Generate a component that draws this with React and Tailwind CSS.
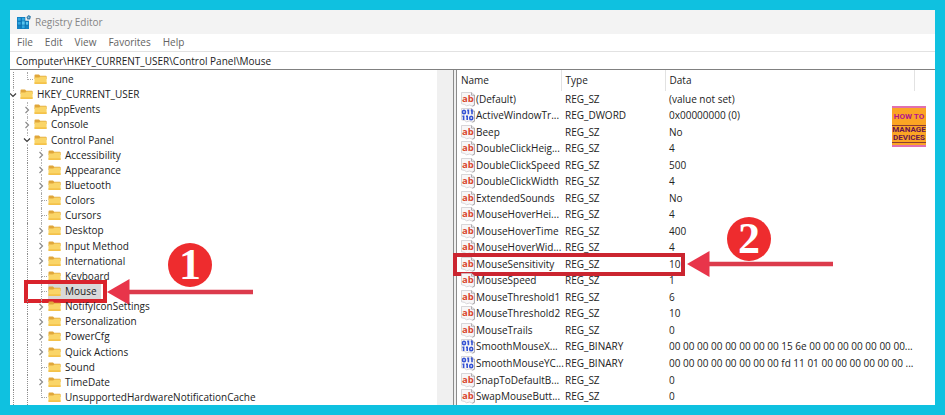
import React, { useState } from "react";

const menus = ["File", "Edit", "View", "Favorites", "Help"];

// marker: what stands in the last guide column of the row
const keys = [
  { name: "zune", depth: 1, marker: "end" },
  { name: "HKEY_CURRENT_USER", depth: 0, marker: "open" },
  { name: "AppEvents", depth: 1, marker: "closed" },
  { name: "Console", depth: 1, marker: "closed" },
  { name: "Control Panel", depth: 1, marker: "open" },
  { name: "Accessibility", depth: 2, marker: "closed" },
  { name: "Appearance", depth: 2, marker: "closed" },
  { name: "Bluetooth", depth: 2, marker: "closed" },
  { name: "Colors", depth: 2, marker: "leaf" },
  { name: "Cursors", depth: 2, marker: "leaf" },
  { name: "Desktop", depth: 2, marker: "closed" },
  { name: "Input Method", depth: 2, marker: "closed" },
  { name: "International", depth: 2, marker: "closed" },
  { name: "Keyboard", depth: 2, marker: "leaf" },
  { name: "Mouse", depth: 2, marker: "leaf" },
  { name: "NotifyIconSettings", depth: 2, marker: "closed" },
  { name: "Personalization", depth: 2, marker: "closed" },
  { name: "PowerCfg", depth: 2, marker: "closed" },
  { name: "Quick Actions", depth: 2, marker: "closed" },
  { name: "Sound", depth: 2, marker: "leaf" },
  { name: "TimeDate", depth: 2, marker: "closed" },
  { name: "UnsupportedHardwareNotificationCache", depth: 2, marker: "end" },
];

const values = [
  ["(Default)", "REG_SZ", "(value not set)"],
  ["ActiveWindowTr...", "REG_DWORD", "0x00000000 (0)"],
  ["Beep", "REG_SZ", "No"],
  ["DoubleClickHeig...", "REG_SZ", "4"],
  ["DoubleClickSpeed", "REG_SZ", "500"],
  ["DoubleClickWidth", "REG_SZ", "4"],
  ["ExtendedSounds", "REG_SZ", "No"],
  ["MouseHoverHei...", "REG_SZ", "4"],
  ["MouseHoverTime", "REG_SZ", "400"],
  ["MouseHoverWid...", "REG_SZ", "4"],
  ["MouseSensitivity", "REG_SZ", "10"],
  ["MouseSpeed", "REG_SZ", "1"],
  ["MouseThreshold1", "REG_SZ", "6"],
  ["MouseThreshold2", "REG_SZ", "10"],
  ["MouseTrails", "REG_SZ", "0"],
  ["SmoothMouseX...", "REG_BINARY", "00 00 00 00 00 00 00 00 15 6e 00 00 00 00 00 00 00..."],
  ["SmoothMouseYC...", "REG_BINARY", "00 00 00 00 00 00 00 00 fd 11 01 00 00 00 00 00 00 ..."],
  ["SnapToDefaultB...", "REG_SZ", "0"],
  ["SwapMouseButt...", "REG_SZ", "0"],
];

const RegeditIcon = () => (
  <svg className="w-[14px] h-[14px] shrink-0" viewBox="0 0 14 14" aria-hidden="true">
    <path d="M0 2h8v4h4v8H0z" fill="#1583c4" />
    <path d="M1 3h3v3H1zM5 3h3v3H5zM1 7h3v3H1zM5 10h3v3H5z" fill="#2fa9e2" />
    <path d="M5 6h3v4H5zM9 7h2v3H9z" fill="#58c6f0" />
    <path d="M4 2v12M8 2v12M0 6h12M0 10h12" stroke="#0c6cab" strokeWidth="0.6" />
    <path d="M9.4 2.2 11.6 0 14 1.6 13 4.4 10.4 4.6z" fill="#3b7fa9" />
    <circle cx="11.6" cy="2.4" r="0.8" fill="#8cc6e4" />
  </svg>
);

const FolderIcon = () => (
  <svg className="w-[13px] h-[11px] shrink-0" viewBox="0 0 13 11" aria-hidden="true">
    <path d="M0.5 1.4q0-.9.9-.9H5l1.2 1.3h5.6q.8 0 .8.8V5H.5z" fill="#e0a63a" />
    <path d="M0.5 3.4h4.7l1.2-1h5.4q.8 0 .8.8v6q0 .9-.9.9H1.4q-.9 0-.9-.9z" fill="#fad568" />
    <path d="M.5 8.2h12.1v1q0 .9-.9.9H1.4q-.9 0-.9-.9z" fill="#f4c24a" />
  </svg>
);

const Page = () => (
  <>
    <path d="M.5.5h10l3 2.6v10.2l-2 .9-3-1.2-3 .8-2-1.4-3-.6z" fill="#f8f6f7" stroke="#c9c6ca" strokeWidth="0.7" />
    <path d="M10.5.5v2.7h3M13.4 3v10.2l-2 .9" fill="none" stroke="#9d9aa0" strokeWidth="0.8" />
  </>
);

const StringIcon = () => (
  <svg className="w-[14px] h-[15px] shrink-0" viewBox="0 0 14 15" aria-hidden="true">
    <Page />
    <text x="1" y="9.6" fontSize="9.5" fontWeight="700" fill="#d9472f" fontFamily="Open Sans, sans-serif">
      ab
    </text>
  </svg>
);

const BinaryIcon = () => (
  <svg className="w-[14px] h-[15px] shrink-0" viewBox="0 0 14 15" aria-hidden="true">
    <Page />
    <g fill="none" stroke="#3452d4" strokeWidth="1.6">
      <ellipse cx="3" cy="4" rx="1.5" ry="1.7" />
      <path d="M6.2 2.4h1.2v3.8M9.8 2.4H11v3.8" />
      <path d="M1.4 8.3h1.2v3.8M5 8.3h1.2v3.8" />
      <ellipse cx="10.2" cy="10" rx="1.5" ry="1.7" />
    </g>
  </svg>
);

const Chevron = ({ open }) => (
  <svg className="w-[8px] h-[8px] shrink-0" viewBox="0 0 8 8" aria-hidden="true">
    <path
      d={open ? "M1 2.5 4 5.5 7 2.5" : "M2.5 1 5.5 4 2.5 7"}
      fill="none"
      stroke={open ? "#3a3a3a" : "#8a8a8a"}
      strokeWidth="1.2"
    />
  </svg>
);

const Guide = ({ type }) => {
  if (type === "line") {
    return (
      <span className="flex w-[14px] shrink-0 self-stretch pl-[7px]">
        <span className="border-l border-dotted border-[#8d8d8d]" />
      </span>
    );
  }
  if (type === "open" || type === "closed") {
    return (
      <span className="flex w-[14px] shrink-0 self-stretch flex-col items-center">
        <span className="flex-1 border-l border-dotted border-[#b5b5b5]" />
        <Chevron open={type === "open"} />
        <span className="flex-1 border-l border-dotted border-[#b5b5b5]" />
      </span>
    );
  }
  return (
    <span className="flex w-[14px] shrink-0 self-stretch flex-col pl-[7px] pr-[1px]">
      <span className="flex-1 border-l border-b border-dotted border-[#a5a5a5]" />
      <span
        className={
          type === "leaf"
            ? "flex-1 border-l border-dotted border-[#a5a5a5]"
            : "flex-1"
        }
      />
    </span>
  );
};

const Arrow = () => (
  <svg className="w-[146px] h-[26px]" viewBox="0 0 146 26" aria-hidden="true">
    <path d="M20 13h126" stroke="#dc3b4c" strokeWidth="4.6" />
    <path d="M0 13 22.5 0v26z" fill="#e8354a" />
  </svg>
);

const Step = ({ number }) => (
  <span className="flex w-[44px] h-[44px] items-center justify-center rounded-full bg-[#ee2c2e] font-['Liberation_Serif',serif] text-[44px] leading-none font-bold text-white">
    {number}
  </span>
);

const KeyRow = ({ item, selected, onSelect }) => (
  <li className="relative flex flex-1 items-center">
    <span className="-ml-1 flex self-stretch">
      {item.depth > 0 && <Guide type="line" />}
      {item.depth > 1 && <Guide type="line" />}
      <Guide type={item.marker} />
    </span>
    <button
      type="button"
      onClick={onSelect}
      className={
        selected
          ? "flex items-center gap-1 self-stretch bg-[#d9d9d9] pr-1"
          : "flex items-center gap-1 self-stretch pr-1"
      }
    >
      <FolderIcon />
      {item.name}
    </button>
    {item.name === "Mouse" && (
      <>
        <span className="absolute left-[14px] -top-1 -bottom-1 w-[83px] border-4 border-[#d9232c]" />
        <span className="absolute left-[97px] top-1/2 -translate-y-1/2">
          <Arrow />
        </span>
        <span className="absolute left-[158px] bottom-3">
          <Step number="1" />
        </span>
      </>
    )}
  </li>
);

const Logo = () => (
  <div className="absolute right-[9px] top-9 flex w-[34px] flex-col border-y-2 border-[#e070b0] bg-[#fba524] text-center font-[Roboto,sans-serif] font-bold whitespace-nowrap">
    <span className="py-1 text-[8px] leading-[9px] text-[#b3138f]">HOW TO</span>
    <span className="border-y border-[#8a3c33] text-[8px] leading-[8px] text-[#6a1550]">
      MANAGE
      <br />
      DEVICES
    </span>
    <span className="h-[2px]" />
  </div>
);

const App = () => {
  const [selectedKey, setSelectedKey] = useState("Mouse");
  const [path, setPath] = useState(
    "Computer\\HKEY_CURRENT_USER\\Control Panel\\Mouse"
  );

  return (
    <div className="flex min-h-screen bg-[#0fc1e0] p-[10px] font-['Open_Sans','Noto_Sans',sans-serif] text-[10px] leading-[15px] text-[#222222]">
      <div className="flex min-w-0 flex-1 flex-col bg-white">
        <header className="flex h-6 items-center gap-1 bg-[#f3f3f3] pl-[7px] text-[#858585]">
          <RegeditIcon />
          <h1>Registry Editor</h1>
        </header>
        <nav className="flex h-[18px] items-center gap-3 border-b border-[#e2e2e2] pl-[7px] text-[#636363]">
          {menus.map((menu) => (
            <button type="button" key={menu}>
              {menu}
            </button>
          ))}
        </nav>
        <input
          type="text"
          aria-label="Address"
          className="h-[18px] w-full border-b border-[#808080] px-[6px] outline-none"
          value={path}
          onChange={(event) => setPath(event.target.value)}
        />
        <main className="flex flex-1">
          <div className="flex w-[48%] shrink-0 border-r border-[#8c8c8c]">
            <ul className="flex flex-1 flex-col overflow-hidden pt-0.5 whitespace-nowrap">
              {keys.map((item) => (
                <KeyRow
                  item={item}
                  key={item.name}
                  selected={item.name === selectedKey}
                  onSelect={() => setSelectedKey(item.name)}
                />
              ))}
            </ul>
            <div className="w-4 bg-[#f0f0f0]" />
          </div>
          <div className="w-[3px] border-r border-[#8c8c8c] bg-[#f0f0f0]" />
          <div className="relative flex min-w-0 flex-1">
            <table className="w-full table-fixed border-collapse text-left whitespace-nowrap">
              <thead>
                <tr className="h-[21px]">
                  <th className="w-[104px] border-r border-[#e2e2e2] p-0 pl-1 font-normal">Name</th>
                  <th className="w-[104px] border-r border-[#e2e2e2] p-0 pl-1 font-normal">Type</th>
                  <th className="w-[249px] border-r border-[#e2e2e2] p-0 pl-1 font-normal">Data</th>
                  <td />
                </tr>
              </thead>
              <tbody>
                {values.map(([name, type, data]) => (
                  <tr key={name}>
                    <td className="relative p-0 pl-1">
                      <span className="flex items-center gap-px">
                        {type === "REG_SZ" ? <StringIcon /> : <BinaryIcon />}
                        {name}
                      </span>
                      {name === "MouseSensitivity" && (
                        <>
                          <span className="absolute -left-1 -top-[3px] -bottom-[3px] w-[232px] border-4 border-[#cb2530]" />
                          <span className="absolute left-[230px] top-1/2 -translate-y-1/2">
                            <Arrow />
                          </span>
                          <span className="absolute left-[270px] bottom-3">
                            <Step number="2" />
                          </span>
                        </>
                      )}
                    </td>
                    <td className="p-0 pl-1">{type}</td>
                    <td className="p-0 pl-1">{data}</td>
                    <td />
                  </tr>
                ))}
              </tbody>
            </table>
            <Logo />
          </div>
        </main>
      </div>
    </div>
  );
};

export default App;
